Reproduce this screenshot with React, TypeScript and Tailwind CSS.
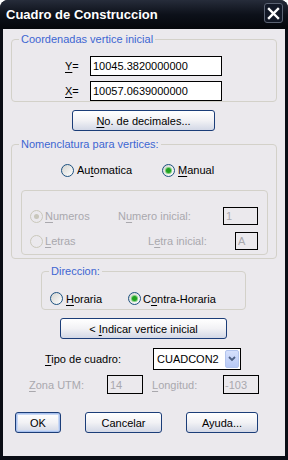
import React from "react";

const FONT = "font-['Liberation_Sans',Arial,sans-serif]";

function Radio({ checked = false, disabled = false }: { checked?: boolean; disabled?: boolean }) {
  return (
    <span
      className={
        disabled
          ? "w-[13px] h-[13px] rounded-full border border-[#cac8bb] bg-[#ebe9ed] flex items-center justify-center shrink-0"
          : "w-[13px] h-[13px] rounded-full border border-[#1c5180] bg-gradient-to-br from-[#d4d4d0] to-white flex items-center justify-center shrink-0"
      }
    >
      {checked && (
        <span
          className={
            disabled
              ? "w-[5px] h-[5px] rounded-full bg-[#c9c7bc]"
              : "w-[5px] h-[5px] rounded-full bg-[#21a121] shadow-[0_0_0_1px_#7fd07f]"
          }
        />
      )}
    </span>
  );
}

function Btn({ children, w, isDefault = false }: { children: React.ReactNode; w: string; isDefault?: boolean }) {
  return (
    <div
      className={
        (isDefault
          ? "shadow-[inset_0_0_0_1px_#a8c1ee,inset_0_0_0_2px_#c9d8f4] "
          : "") +
        w +
        " h-[21px] rounded-[3px] border border-[#1b3d78] bg-gradient-to-b from-white via-[#f2f2f5] to-[#d3d8e6] text-black flex items-center justify-center shrink-0"
      }
    >
      <span className="whitespace-pre">{children}</span>
    </div>
  );
}

function Group({ label, className, children }: { label?: string; className: string; children: React.ReactNode }) {
  return (
    <div className={"relative border border-[#d3d1c9] rounded-[4px] " + className}>
      {label && (
        <span className="absolute left-[7px] top-[-8px] px-[2px] bg-[#ebe9ed] text-[#3d66d2] leading-[14px]">
          {label}
        </span>
      )}
      {children}
    </div>
  );
}

const U = ({ children }: { children: React.ReactNode }) => (
  <span className="underline underline-offset-[2px] decoration-[1px]">{children}</span>
);

export default function App() {
  return (
    <div className={FONT + " w-[288px] h-[460px] bg-[#0a0d15] rounded-t-[8px] flex flex-col overflow-hidden text-[11px] leading-[14px]"}>
      {/* Title bar */}
      <div className="h-[29px] shrink-0 flex items-center justify-between pl-[6px] pr-[5px] bg-gradient-to-b from-[#262c3a] via-[#0d111a] to-[#05070b]">
        <span className="text-white font-bold text-[13px] mt-[1px]">Cuadro de Construccion</span>
        <div className="w-[19px] h-[20px] mb-[3px] rounded-[3px] border border-[#5b6373] bg-[#121826] flex items-center justify-center">
          <svg width="13" height="13" viewBox="0 0 13 13">
            <path d="M2 2 L11 11 M11 2 L2 11" stroke="white" strokeWidth="2.4" strokeLinecap="square" />
          </svg>
        </div>
      </div>

      {/* Client */}
      <div className="mx-[3px] mb-[4px] flex-1 bg-[#ebe9ed] flex flex-col">
        {/* Coordenadas */}
        <Group label="Coordenadas vertice inicial" className="mt-[10px] ml-[8px] w-[266px] h-[63px] flex flex-col pt-[16px] gap-[5px]">
          <div className="flex items-center pl-[53px]">
            <span className="w-[25px]"><U>Y</U>=</span>
            <div className="w-[132px] h-[20px] border border-black bg-white flex items-center pl-[2px] text-black">10045.3820000000</div>
          </div>
          <div className="flex items-center pl-[53px]">
            <span className="w-[25px]"><U>X</U>=</span>
            <div className="w-[132px] h-[20px] border border-black bg-white flex items-center pl-[2px] text-black">10057.0639000000</div>
          </div>
        </Group>

        <div className="mt-[8px] ml-[69px]">
          <Btn w="w-[143px]"><U>N</U>o. de decimales...</Btn>
        </div>

        {/* Nomenclatura */}
        <Group label="Nomenclatura para vertices:" className="mt-[13px] ml-[8px] w-[266px] h-[115px] flex flex-col pt-[18px]">
          <div className="flex items-center pl-[49px] h-[14px]">
            <span className="w-[101px] flex items-center gap-[3px]">
              <Radio />
              <span>Au<U>t</U>omatica</span>
            </span>
            <span className="flex items-center gap-[3px]">
              <Radio checked />
              <span><U>M</U>anual</span>
            </span>
          </div>
          <Group className="mt-[13px] ml-[9px] w-[247px] h-[65px] flex flex-col pt-[16px] gap-[7px] text-[#a9a8ad]">
            <div className="flex items-center pl-[8px] h-[18px]">
              <span className="w-[88px] flex items-center gap-[2px]">
                <Radio checked disabled />
                <span><U>N</U>umeros</span>
              </span>
              <span className="w-[105px]">N<U>u</U>mero inicial:</span>
              <div className="w-[35px] h-[18px] border border-black flex items-center pl-[2px]">1</div>
            </div>
            <div className="flex items-center pl-[8px] h-[18px]">
              <span className="w-[118px] flex items-center gap-[2px]">
                <Radio disabled />
                <span><U>L</U>etras</span>
              </span>
              <span className="w-[87px]">L<U>e</U>tra inicial:</span>
              <div className="w-[23px] h-[18px] border border-black flex items-center pl-[2px]">A</div>
            </div>
          </Group>
        </Group>

        {/* Direccion */}
        <Group label="Direccion:" className="mt-[12px] ml-[38px] w-[205px] h-[39px] flex flex-col pt-[20px]">
          <div className="flex items-center pl-[8px] h-[13px]">
            <span className="w-[78px] flex items-center gap-[3px]">
              <Radio />
              <span><U>H</U>oraria</span>
            </span>
            <span className="flex items-center gap-[2px]">
              <Radio checked />
              <span>C<U>o</U>ntra-Horaria</span>
            </span>
          </div>
        </Group>

        <div className="mt-[8px] ml-[57px]">
          <Btn w="w-[167px]">&lt; <U>I</U>ndicar vertice inicial</Btn>
        </div>

        {/* Tipo de cuadro */}
        <div className="mt-[9px] ml-[42px] flex items-center">
          <span className="w-[108px]"><U>T</U>ipo de cuadro:</span>
          <div className="w-[88px] h-[22px] border border-black bg-white flex items-center">
            <span className="flex-1 pl-[3px] text-black">CUADCON2</span>
            <div className="w-[14px] h-[18px] mr-[1px] rounded-[2px] border border-[#b3c5ee] bg-gradient-to-b from-[#d6e1fc] to-[#b7c9f6] flex items-center justify-center">
              <svg width="8" height="6" viewBox="0 0 8 6">
                <path d="M1 1 L4 4 L7 1" stroke="#4d6185" strokeWidth="1.8" fill="none" />
              </svg>
            </div>
          </div>
        </div>

        {/* Zona UTM */}
        <div className="mt-[5px] ml-[26px] flex items-center text-[#a9a8ad]">
          <span className="w-[78px]"><U>Z</U>ona UTM:</span>
          <div className="w-[36px] h-[19px] border border-black flex items-center pl-[2px]">14</div>
          <span className="ml-[9px] w-[71px]"><U>L</U>ongitud:</span>
          <div className="w-[36px] h-[19px] border border-black flex items-center pl-[1px]">-103</div>
        </div>

        {/* Buttons */}
        <div className="mt-[18px] ml-[12px] flex items-center gap-[24px]">
          <Btn w="w-[46px]" isDefault>OK</Btn>
          <Btn w="w-[77px]">Cancelar</Btn>
          <Btn w="w-[72px]">Ayuda...</Btn>
        </div>
      </div>
    </div>
  );
}
